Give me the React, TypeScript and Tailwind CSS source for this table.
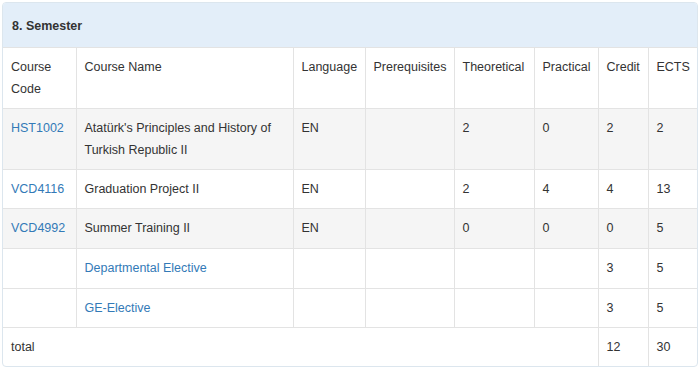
type Row = {
    code?: string;
    name: string;
    nameLink?: boolean;
    lang?: string;
    prereq?: string;
    theo?: string;
    prac?: string;
    credit: string;
    ects: string;
    striped?: boolean;
    tall?: boolean;
};

const rows: Row[] = [
    { code: "HST1002", name: "Atatürk's Principles and History of Turkish Republic II", lang: "EN", theo: "2", prac: "0", credit: "2", ects: "2", striped: true },
    { code: "VCD4116", name: "Graduation Project II", lang: "EN", theo: "2", prac: "4", credit: "4", ects: "13" },
    { code: "VCD4992", name: "Summer Training II", lang: "EN", theo: "0", prac: "0", credit: "0", ects: "5", striped: true, tall: true },
    { name: "Departmental Elective", nameLink: true, credit: "3", ects: "5", tall: true },
    { name: "GE-Elective", nameLink: true, credit: "3", ects: "5" },
];

const cell = "px-[8px] pt-[8px] align-top text-left font-normal border-t border-[#e3e3e3]";

export default function App() {
    return (
        <div className="w-[700px] h-[368px] bg-white pt-[2px] px-[2px] text-[12.5px] leading-[22px] text-[#333] font-['Liberation_Sans',Arial,sans-serif]">
            <div className="border border-[#dce6ee] rounded-[4px] overflow-hidden">
                {/* Heading */}
                <div className="bg-[#e3eef9] px-[9px] pt-[12px] pb-[10px] font-bold">8. Semester</div>

                <table className="w-full table-fixed border-collapse">
                    <colgroup>
                        <col className="w-[73px]" />
                        <col className="w-[217px]" />
                        <col className="w-[72px]" />
                        <col className="w-[89px]" />
                        <col className="w-[80px]" />
                        <col className="w-[64px]" />
                        <col className="w-[50px]" />
                        <col />
                    </colgroup>
                    <thead>
                        <tr>
                            <th className={`${cell} pb-[8px] border-r`}>Course Code</th>
                            <th className={`${cell} pb-[8px] border-r`}>Course Name</th>
                            <th className={`${cell} pb-[8px] border-r`}>Language</th>
                            <th className={`${cell} pb-[8px] border-r`}>Prerequisites</th>
                            <th className={`${cell} pb-[8px] border-r`}>Theoretical</th>
                            <th className={`${cell} pb-[8px] border-r`}>Practical</th>
                            <th className={`${cell} pb-[8px] border-r`}>Credit</th>
                            <th className={`${cell} pb-[8px]`}>ECTS</th>
                        </tr>
                    </thead>
                    <tbody>
                        {rows.map((r, i) => {
                            const c = `${cell} ${r.tall ? "pb-[9px]" : "pb-[8px]"}`;
                            return (
                                <tr key={i} className={r.striped ? "bg-[#f5f5f5]" : "bg-white"}>
                                    <td className={`${c} border-r`}>
                                        {r.code && <a className="text-[#337ab7]">{r.code}</a>}
                                    </td>
                                    <td className={`${c} border-r`}>
                                        {r.nameLink ? <a className="text-[#337ab7]">{r.name}</a> : r.name}
                                    </td>
                                    <td className={`${c} border-r`}>{r.lang}</td>
                                    <td className={`${c} border-r`}>{r.prereq}</td>
                                    <td className={`${c} border-r`}>{r.theo}</td>
                                    <td className={`${c} border-r`}>{r.prac}</td>
                                    <td className={`${c} border-r`}>{r.credit}</td>
                                    <td className={c}>{r.ects}</td>
                                </tr>
                            );
                        })}
                        <tr>
                            <td colSpan={6} className={`${cell} pb-[8px] border-r`}>total</td>
                            <td className={`${cell} pb-[8px] border-r`}>12</td>
                            <td className={`${cell} pb-[8px]`}>30</td>
                        </tr>
                    </tbody>
                </table>
            </div>
        </div>
    );
}
